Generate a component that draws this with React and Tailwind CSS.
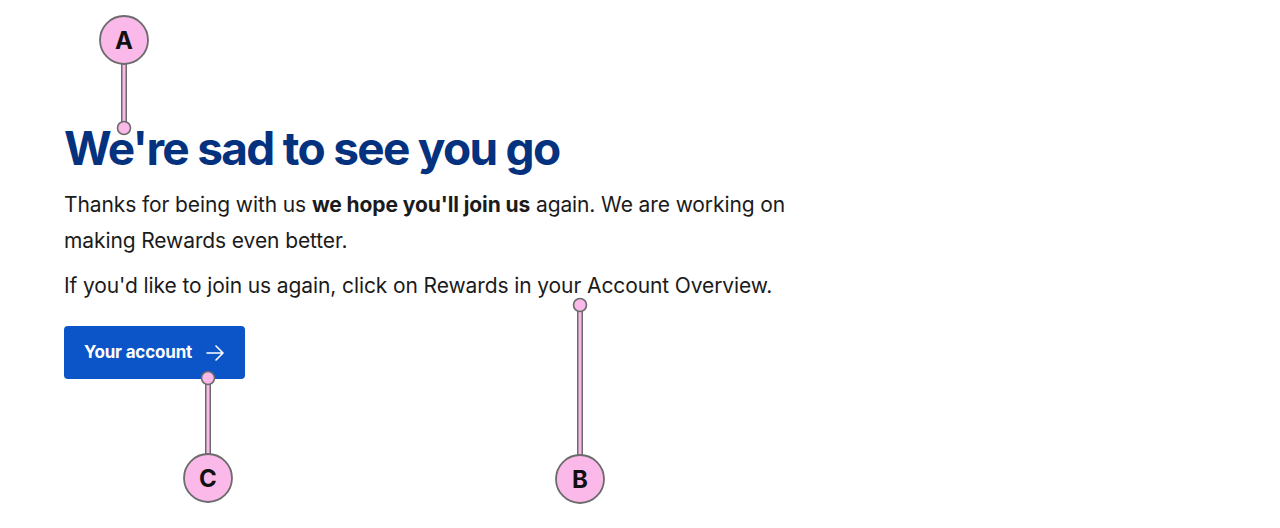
import React from "react";

function Callout({ label, cx, cy, dx, dy }) {
  const r = 24;
  const up = dy < cy;
  const y1 = up ? cy - r : cy + r;
  return (
    <g>
      <line x1={cx} y1={y1} x2={dx} y2={dy} stroke="#6b6b6b" strokeWidth="6" />
      <line x1={cx} y1={y1} x2={dx} y2={dy} stroke="#fbb9ea" strokeWidth="3" />
      <circle cx={dx} cy={dy} r="6.5" fill="#fbb9ea" stroke="#6b6b6b" strokeWidth="1.6" />
      <circle cx={cx} cy={cy} r={r} fill="#fbb9ea" stroke="#6b6b6b" strokeWidth="1.8" />
      <text
        x={cx}
        y={cy + 8.5}
        textAnchor="middle"
        fontFamily="Inter, 'Liberation Sans', sans-serif"
        fontWeight="700"
        fontSize="24"
        fill="#111"
      >
        {label}
      </text>
    </g>
  );
}

export default function App() {
  return (
    <div className="relative w-[1280px] h-[528px] bg-white overflow-hidden" style={{ fontFamily: "Inter, 'Liberation Sans', sans-serif" }}>
      <div className="pl-16 pt-[123px]">
        <h1 className="text-[46px] leading-[50px] font-bold tracking-[-0.037em] text-[#05327f]">
          We're sad to see you go
        </h1>
        <p className="mt-[14px] w-[740px] text-[21px] leading-[36px] text-[#1b1b1b] tracking-[-0.005em]">
          Thanks for being with us <strong className="font-bold">we hope you'll join us</strong> again. We are working on making Rewards even better.
        </p>
        <p className="mt-[9px] text-[21px] leading-[36px] text-[#1b1b1b] tracking-[-0.005em]">
          If you'd like to join us again, click on Rewards in your Account Overview.
        </p>
        <button className="mt-[22px] flex items-center gap-[13px] h-[53px] w-[181px] pl-5 rounded-[4px] bg-[#0b55c8] text-white text-[17px] font-bold tracking-[-0.01em]">
          Your account
          <svg width="20" height="20" viewBox="0 0 20 20" fill="none" stroke="white" strokeWidth="1.6" strokeLinecap="round" strokeLinejoin="round">
            <path d="M2 10h16M11 3l7 7-7 7" />
          </svg>
        </button>
      </div>
      <svg className="absolute inset-0 pointer-events-none" width="1280" height="528">
        <Callout label="A" cx={124} cy={40} dx={124} dy={128} />
        <Callout label="B" cx={580} cy={479} dx={580} dy={305} />
        <Callout label="C" cx={208} cy={478} dx={208} dy={378} />
      </svg>
    </div>
  );
}
